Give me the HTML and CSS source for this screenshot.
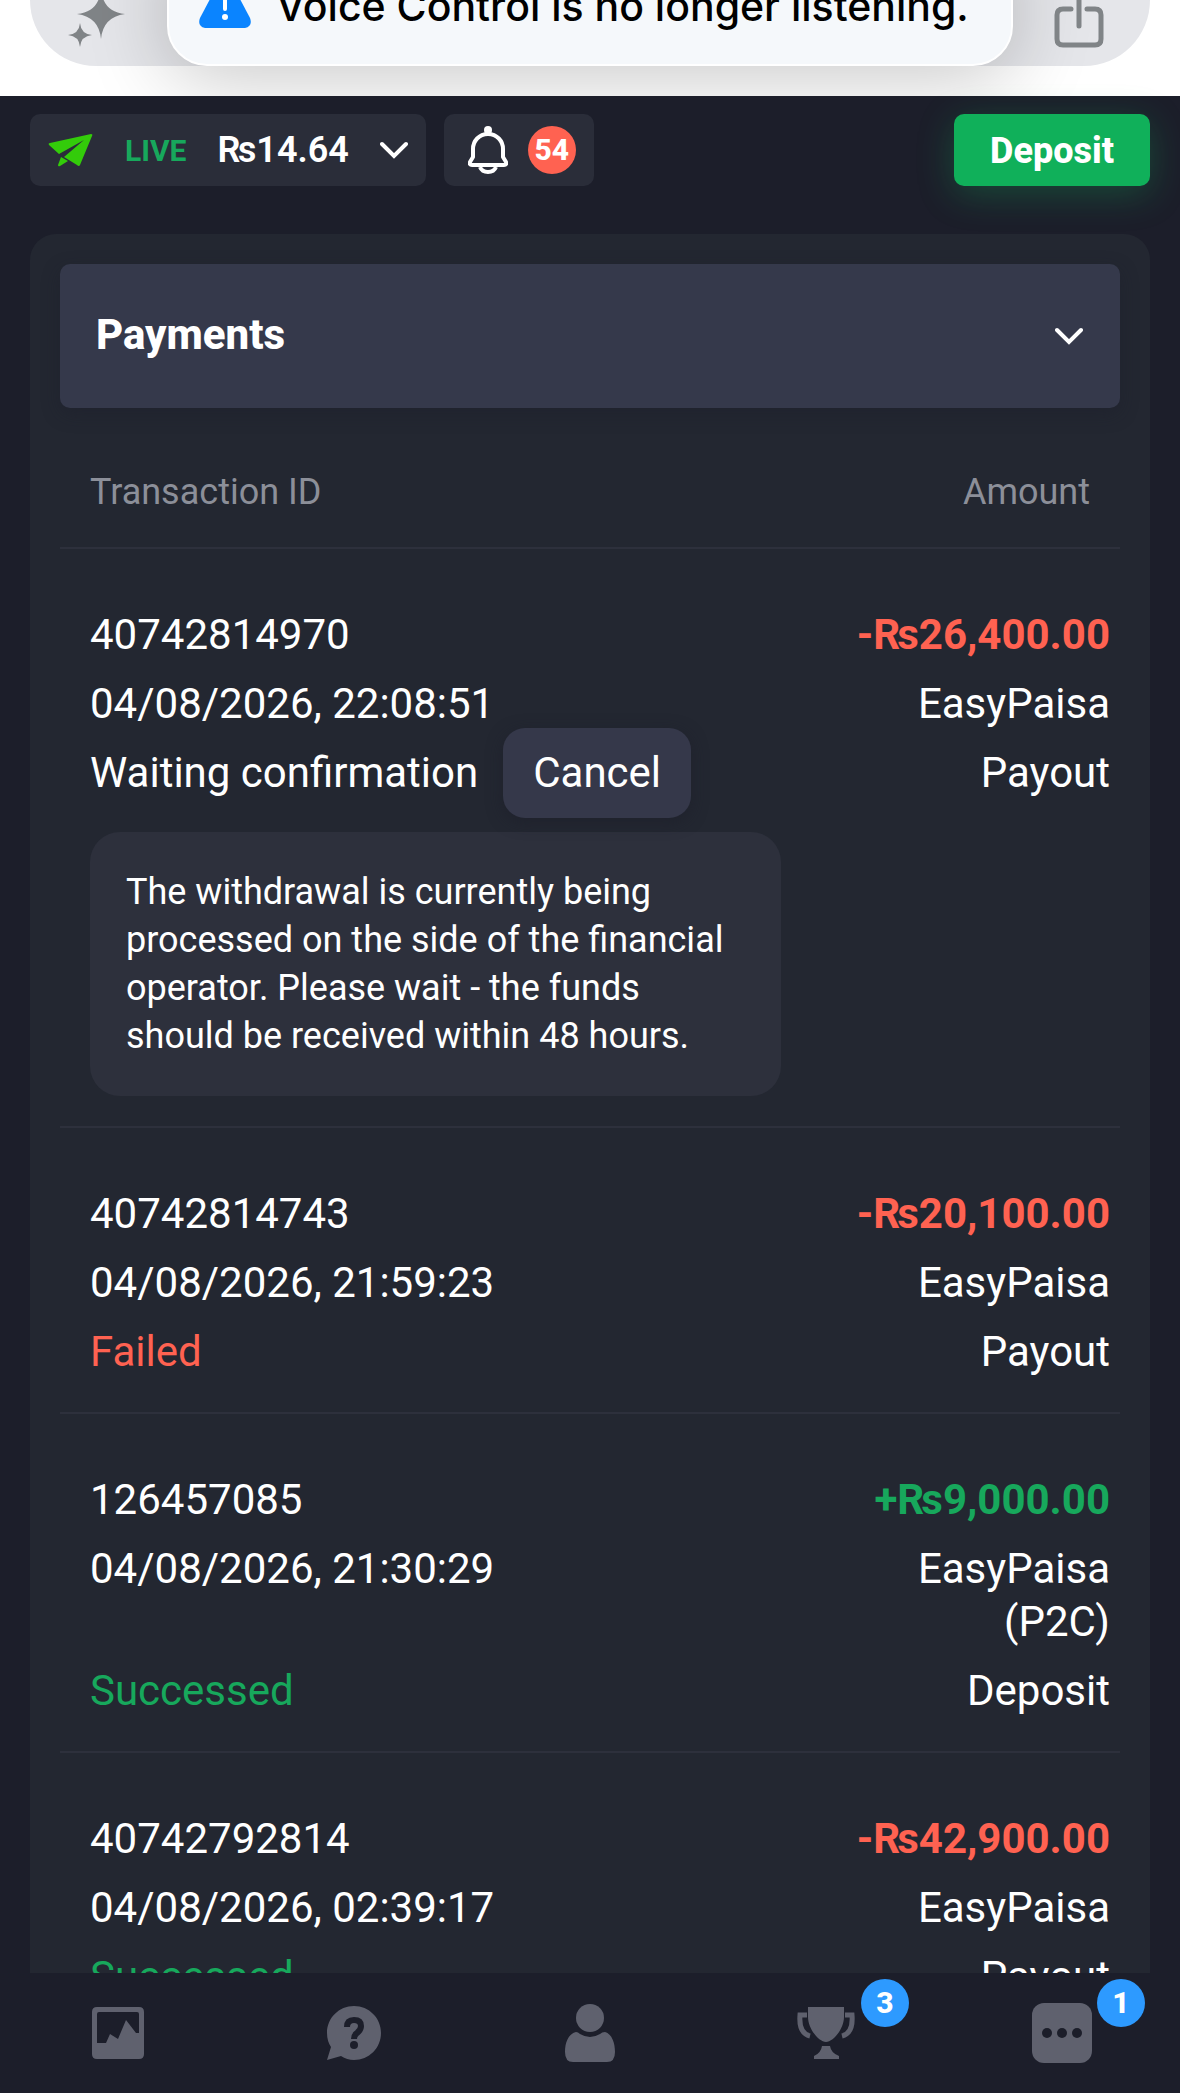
FILE: index.html
```html
<!DOCTYPE html>
<html lang="en">

<head>
    <meta charset="UTF-8">
    <meta name="viewport" content="width=device-width, initial-scale=1.0">
    <title>Payments</title>
    <link rel="stylesheet" href="styles.css">
</head>

<body>
    <div class="browser">
        <div class="address-bar">
            <button type="button" class="bar-button" aria-label="Assistant">
                <svg width="60" height="84" viewBox="0 0 60 84">
                    <path d="M35 25 Q37 48 59 50 Q37 53 35 75 Q33 53 11 50 Q33 48 35 25Z" />
                    <path d="M14 59 Q15 70 26 71 Q15 72 14 83 Q13 72 2 71 Q13 70 14 59Z" />
                </svg>
            </button>
            <div class="notice" role="alert">
                <svg width="52" height="50" viewBox="0 0 52 50">
                    <path d="M20 4 Q26 -4 32 4 L51 40 Q54 48 46 50 L6 50 Q-2 48 1 40Z" fill="#0a84ff" />
                    <path d="M26 14V31" stroke="#fff" stroke-width="4" stroke-linecap="round" />
                    <circle cx="26" cy="39" r="3" fill="#fff" />
                </svg>
                <span>Voice Control is no longer listening.</span>
            </div>
            <button type="button" class="bar-button" aria-label="Share">
                <svg width="60" height="84" viewBox="0 0 60 84">
                    <path d="M22 45H14Q8 45 8 51V75Q8 81 14 81H46Q52 81 52 75V51Q52 45 46 45H38M30 18V62M20 28L30 18L40 28" fill="none" stroke="#808487" stroke-width="5" stroke-linecap="round" />
                </svg>
            </button>
        </div>
    </div>

    <header class="header">
        <button type="button" class="chip balance">
            <svg width="46" height="34" viewBox="0 0 46 34">
                <path d="M1 12Q0 10 2 10L43 1Q45 1 44 3L32 32Q31 34 29 32L16 24L36 7L11 21Z" fill="#33cc0a" />
                <path d="M13 24L20 28L12 33Q10 34 10 32Z" fill="#33cc0a" />
            </svg>
            <span class="live">LIVE</span>
            <span class="sum">₨14.64</span>
            <svg width="28" height="18" viewBox="0 0 28 18">
                <path d="M2 3L14 15L26 3" class="chevron" />
            </svg>
        </button>
        <button type="button" class="chip alerts" aria-label="Notifications">
            <svg width="40" height="48" viewBox="0 0 40 48">
                <path d="M20 8C11 8 5 15 5 23V31L2 36Q1 39 4 39H36Q39 39 38 36L35 31V23C35 15 29 8 20 8Z" fill="none" stroke="#fff" stroke-width="4" stroke-linejoin="round" />
                <path d="M20 9V4M12 41Q14 46 20 46Q26 46 28 41" fill="none" stroke="#fff" stroke-width="4" />
                <circle cx="20" cy="4" r="4" fill="#fff" />
            </svg>
            <span class="count">54</span>
        </button>
        <button type="button" class="deposit">Deposit</button>
    </header>

    <main class="content">
        <section class="card">
            <div class="picker">
                <select aria-label="History type">
                    <option>Payments</option>
                </select>
                <svg width="28" height="18" viewBox="0 0 28 18">
                    <path d="M2 3L14 15L26 3" class="chevron" />
                </svg>
            </div>

            <table class="history">
                <thead>
                    <tr>
                        <th>Transaction ID</th>
                        <th>Amount</th>
                    </tr>
                </thead>
                <tbody>
                    <tr>
                        <td>40742814970</td>
                        <td class="minus">-₨26,400.00</td>
                    </tr>
                    <tr>
                        <td>04/08/2026, 22:08:51</td>
                        <td>EasyPaisa</td>
                    </tr>
                    <tr>
                        <td>
                            <div class="status">
                                Waiting confirmation
                                <button type="button" class="cancel">Cancel</button>
                            </div>
                        </td>
                        <td>Payout</td>
                    </tr>
                    <tr class="note-row">
                        <td>
                            <p class="note">The withdrawal is currently being processed on the side of the financial operator. Please wait - the funds should be received within 48 hours.</p>
                        </td>
                        <td></td>
                    </tr>
                </tbody>
                <tbody>
                    <tr>
                        <td>40742814743</td>
                        <td class="minus">-₨20,100.00</td>
                    </tr>
                    <tr>
                        <td>04/08/2026, 21:59:23</td>
                        <td>EasyPaisa</td>
                    </tr>
                    <tr>
                        <td class="failed">Failed</td>
                        <td>Payout</td>
                    </tr>
                </tbody>
                <tbody>
                    <tr>
                        <td>126457085</td>
                        <td class="plus">+₨9,000.00</td>
                    </tr>
                    <tr>
                        <td>04/08/2026, 21:30:29</td>
                        <td>EasyPaisa (P2C)</td>
                    </tr>
                    <tr>
                        <td class="success">Successed</td>
                        <td>Deposit</td>
                    </tr>
                </tbody>
                <tbody>
                    <tr>
                        <td>40742792814</td>
                        <td class="minus">-₨42,900.00</td>
                    </tr>
                    <tr>
                        <td>04/08/2026, 02:39:17</td>
                        <td>EasyPaisa</td>
                    </tr>
                    <tr>
                        <td class="success">Successed</td>
                        <td>Payout</td>
                    </tr>
                </tbody>
            </table>
        </section>
    </main>

    <nav class="tabs">
        <a href="#trade" aria-label="Trading">
            <svg width="60" height="60" viewBox="0 0 60 60">
                <path fill-rule="evenodd" d="M9 4H51Q56 4 56 9V51Q56 56 51 56H9Q4 56 4 51V9Q4 4 9 4ZM11 9Q9 9 9 11V40H18L22 31L30 36L38 17L48 30H51V11Q51 9 49 9Z" />
            </svg>
        </a>
        <a href="#help" aria-label="Support">
            <svg width="60" height="60" viewBox="0 0 60 60">
                <path d="M30 3C45 3 57 15 57 30C57 45 45 57 30 57Q23 57 17 53L3 57L7 44Q3 38 3 30C3 15 15 3 30 3Z" />
                <path d="M23 24Q23 17 30 17Q37 17 37 23Q37 27 33 30Q30 32 30 36" fill="none" stroke="#1c1e2a" stroke-width="6" />
                <circle cx="30" cy="42" r="4" fill="#1c1e2a" />
            </svg>
        </a>
        <a href="#profile" aria-label="Profile">
            <svg width="60" height="60" viewBox="0 0 60 60">
                <circle cx="30" cy="15" r="14" />
                <path d="M16 29Q18 29 20 31Q30 37 40 31Q42 29 45 29C52 31 55 40 55 49Q55 59 47 59H13Q5 59 5 49C5 40 8 31 16 29Z" />
            </svg>
        </a>
        <a href="#tournaments" aria-label="Tournaments">
            <svg width="60" height="60" viewBox="0 0 60 60">
                <path d="M12 4H48V14C48 26 37 39 30 39C23 39 12 26 12 14ZM26 43H34Q35 50 43 53V56H18V53Q25 50 26 43Z" />
                <path d="M11 12H4C3 24 6 31 14 33M49 12H56C57 24 54 31 46 33" fill="none" stroke="#5f616e" stroke-width="5" />
            </svg>
            <span class="badge">3</span>
        </a>
        <a href="#more" aria-label="More">
            <svg width="60" height="60" viewBox="0 0 60 60">
                <rect width="60" height="60" rx="12" />
                <g fill="#1c1e2a">
                    <circle cx="15" cy="30" r="5" />
                    <circle cx="30" cy="30" r="5" />
                    <circle cx="45" cy="30" r="5" />
                </g>
            </svg>
            <span class="badge">1</span>
        </a>
    </nav>
</body>

</html>
```
FILE: styles.css
```css
* {
    box-sizing: border-box;
}

body {
    margin: 0;
    height: 100vh;
    display: flex;
    flex-direction: column;
    background-color: #1c1e2a;
    color: #fff;
    font-family: Roboto, sans-serif;
    font-size: 42px;
    line-height: 53px;
}

button,
select {
    font: inherit;
    color: inherit;
    border: none;
    cursor: pointer;
}

.browser {
    flex: none;
    display: flex;
    align-items: flex-end;
    height: 96px;
    padding: 0 30px 30px;
    background-color: #fff;
    overflow: hidden;
}

.address-bar {
    flex: 1;
    display: flex;
    align-items: stretch;
    height: 132px;
    margin-top: -66px;
    border-radius: 66px;
    background-color: #e5e6ea;
}

.bar-button {
    width: 137px;
    padding: 24px 6px 12px 0;
    background: none;
}

.bar-button svg {
    display: block;
    margin: 0 auto;
    fill: #808487;
}

.notice {
    flex: 1;
    display: flex;
    align-items: flex-end;
    gap: 25px;
    padding: 0 30px 36px;
    border: 2px solid #fff;
    border-radius: 40px;
    background-color: #f5f8fb;
    box-shadow: 0 12px 80px rgba(0, 0, 0, 0.22);
    color: #000;
    font-family: Inter, sans-serif;
    font-size: 41px;
    font-weight: 500;
    line-height: 44px;
    white-space: nowrap;
}

.header {
    flex: none;
    display: flex;
    gap: 18px;
    padding: 18px 30px 48px;
}

.chip {
    display: flex;
    align-items: center;
    height: 72px;
    padding: 0 18px;
    border-radius: 10px;
    background-color: #2a2d39;
}

.balance {
    gap: 31px;
}

.live {
    color: #17a85c;
    font-size: 30px;
    font-weight: 700;
}

.sum {
    font-size: 36px;
    font-weight: 600;
}

.alerts {
    gap: 20px;
    padding: 0 18px 0 24px;
}

.chevron {
    fill: none;
    stroke: #fff;
    stroke-width: 4;
    stroke-linecap: round;
}

.count,
.badge {
    width: 48px;
    height: 48px;
    border-radius: 50%;
    background-color: #ff6251;
    color: #fff;
    font-size: 30px;
    font-weight: 800;
    line-height: 48px;
    text-align: center;
}

.deposit {
    width: 196px;
    height: 72px;
    margin-left: auto;
    padding: 2px 0 0;
    border-radius: 10px;
    background-color: #10b05a;
    box-shadow: 0 8px 36px rgba(16, 176, 90, 0.3);
    font-size: 36px;
    font-weight: 800;
}

.content {
    flex: 1;
    min-height: 0;
    padding: 0 30px;
    overflow: hidden;
}

.card {
    padding: 30px;
    border-radius: 26px;
    background-color: #232731;
}

.picker {
    display: flex;
    align-items: center;
    height: 144px;
    padding-right: 37px;
    border-radius: 10px;
    background-color: #35394b;
    box-shadow: 0 6px 18px rgba(28, 30, 42, 0.4);
}

.picker select {
    flex: 1;
    height: 100%;
    padding: 0 36px 4px;
    appearance: none;
    background: none;
    font-weight: 800;
}

.history {
    width: 100%;
    table-layout: fixed;
    border-collapse: separate;
    border-spacing: 0;
}

.history th {
    padding: 58px 30px 28px;
    border-bottom: 2px solid #2d303c;
    color: #8c8f99;
    font-size: 36px;
    font-weight: 400;
    text-align: left;
}

.history th:last-child {
    width: 32%;
    text-align: right;
}

.history td {
    padding: 8px 0 8px 30px;
    vertical-align: top;
}

.history td:last-child {
    padding-left: 48px;
    padding-right: 10px;
    text-align: right;
}

.history tr:first-child td {
    padding-top: 59px;
}

.history tr:last-child td {
    padding-bottom: 34px;
    border-bottom: 2px solid #2d303c;
}

.history .minus,
.history .plus {
    font-weight: 700;
}

.minus,
.failed {
    color: #ff6251;
}

.plus,
.success {
    color: #17a85c;
}

.status {
    display: flex;
    align-items: center;
    gap: 25px;
    height: 53px;
}

.cancel {
    height: 90px;
    padding: 0 30px;
    border-radius: 22px;
    background-color: #35384a;
    box-shadow: 0 4px 16px rgba(28, 30, 42, 0.6);
}

.history .note-row:last-child td {
    padding-top: 25px;
    padding-bottom: 30px;
}

.note {
    margin: 0;
    padding: 36px;
    border-radius: 30px;
    background-color: #2d303c;
    font-size: 36px;
    line-height: 48px;
}

.tabs {
    flex: none;
    display: grid;
    grid-template-columns: repeat(5, 1fr);
    height: 123px;
    border-bottom: 3px solid #fff;
    background-color: #1c1e2a;
}

.tabs a {
    position: relative;
    display: flex;
    align-items: center;
    justify-content: center;
    fill: #5f616e;
    text-decoration: none;
}

.badge {
    position: absolute;
    top: 6px;
    left: calc(50% + 35px);
    background-color: #2d9aff;
}
```
